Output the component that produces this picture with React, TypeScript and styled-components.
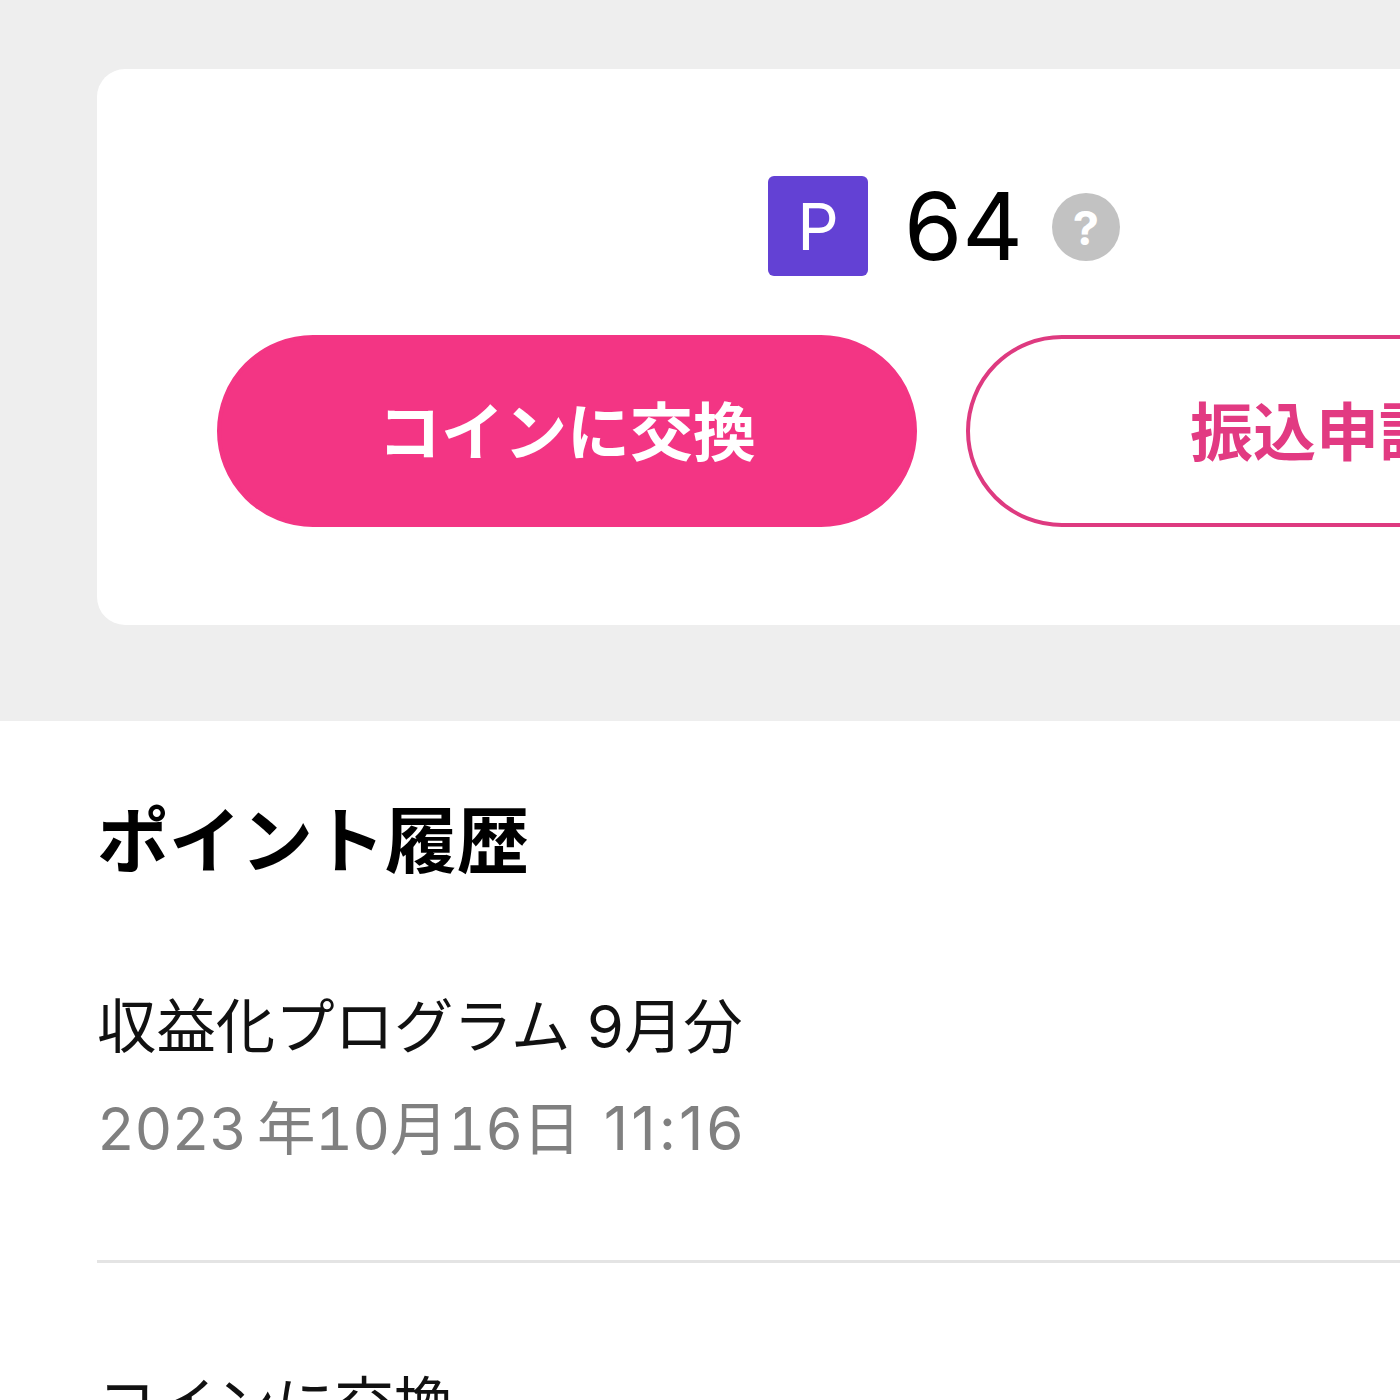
import React from 'react';
import styled, { createGlobalStyle } from 'styled-components';

const GlobalStyle = createGlobalStyle`
  html, body {
    margin: 0;
    padding: 0;
    width: 1400px;
    height: 1400px;
    overflow: hidden;
    background: #fff;
    font-family: 'Inter', 'Noto Sans CJK JP', sans-serif;
  }
`;

const Page = styled.div`
  width: 1400px;
  height: 1400px;
  overflow: hidden;
`;

const SummaryBand = styled.section`
  background: #eeeeee;
  padding: 69px 0 96px 97px;
  width: 1400px;
  box-sizing: border-box;
`;

const SummaryCard = styled.div`
  width: 1694px;
  height: 556px;
  box-sizing: border-box;
  background: #fff;
  border-radius: 28px;
  padding: 107px 120px 0;
`;

const BalanceRow = styled.div`
  display: flex;
  align-items: center;
  justify-content: center;
  height: 100px;
  margin-bottom: 59px;
`;

const PointBadge = styled.div`
  width: 100px;
  height: 100px;
  border-radius: 6px;
  background: #6341d4;
  color: #fff;
  font-size: 65px;
  font-weight: 400;
  font-family: 'Inter', sans-serif;
  display: flex;
  align-items: center;
  justify-content: center;
`;

const BalanceValue = styled.span`
  width: 112px;
  margin-left: 36px;
  font-size: 94px;
  line-height: 100px;
  color: #000;
  font-family: 'Inter', sans-serif;
`;

const HelpIcon = styled.span`
  margin: 2px 0 0 36px;
  width: 68px;
  height: 68px;
  border-radius: 50%;
  background: #c2c2c2;
  color: #fff;
  font-size: 47px;
  font-weight: 700;
  display: flex;
  align-items: center;
  justify-content: center;
`;

const ButtonRow = styled.div`
  display: flex;
  gap: 49px;
`;

const PillButton = styled.button<{ $outline?: boolean }>`
  width: 700px;
  height: 192px;
  flex: none;
  box-sizing: border-box;
  border-radius: 96px;
  border: 4px solid ${(props) => (props.$outline ? '#de3a80' : '#f33584')};
  background: ${(props) => (props.$outline ? '#fff' : '#f33584')};
  color: ${(props) => (props.$outline ? '#e23a82' : '#fff')};
  font-family: 'Noto Sans CJK JP', sans-serif;
  font-size: 63px;
  font-weight: 700;
  padding: 0 0 8px;
`;

const History = styled.section`
  padding: 75px 0 0 97px;
`;

const HistoryTitle = styled.h2`
  margin: 0 0 115px;
  font-family: 'Noto Sans CJK JP', sans-serif;
  font-size: 72px;
  line-height: 80px;
  font-weight: 700;
  color: #000;
`;

const HistoryItem = styled.div`
  padding-bottom: 96px;
  margin-bottom: 106px;
  border-bottom: 3px solid #e4e4e4;
`;

const ItemTitle = styled.div`
  font-family: 'Inter', 'Noto Sans CJK JP', sans-serif;
  font-size: 59.4px;
  line-height: 70px;
  color: #111;
  margin-bottom: 32px;
  white-space: nowrap;
`;

const ItemDate = styled.div`
  font-family: 'Inter', 'Noto Sans CJK JP', sans-serif;
  font-size: 58.5px;
  letter-spacing: -0.5px;
  line-height: 70px;
  color: #808080;
  font-variant-numeric: tabular-nums;
  white-space: nowrap;
`;

const ItemTime = styled.span`
  margin-left: 8px;
  font-size: 60px;
  letter-spacing: 3px;
  font-variant-numeric: normal;
`;

export default function App() {
  return (
    <Page>
      <GlobalStyle />
      <SummaryBand>
        <SummaryCard>
          <BalanceRow>
            <PointBadge>P</PointBadge>
            <BalanceValue>64</BalanceValue>
            <HelpIcon>?</HelpIcon>
          </BalanceRow>
          <ButtonRow>
            <PillButton>コインに交換</PillButton>
            <PillButton $outline>振込申請</PillButton>
          </ButtonRow>
        </SummaryCard>
      </SummaryBand>
      <History>
        <HistoryTitle>ポイント履歴</HistoryTitle>
        <HistoryItem>
          <ItemTitle>収益化プログラム 9月分</ItemTitle>
          <ItemDate>
            2023{'\u2009'}年10月16日 <ItemTime>11:16</ItemTime>
          </ItemDate>
        </HistoryItem>
        <HistoryItem>
          <ItemTitle>コインに交換</ItemTitle>
        </HistoryItem>
      </History>
    </Page>
  );
}
